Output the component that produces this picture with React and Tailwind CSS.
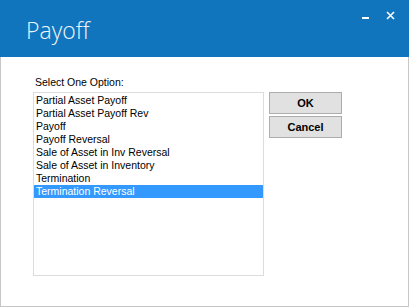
import React, { useState } from 'react';

const options = [
    'Partial Asset Payoff',
    'Partial Asset Payoff Rev',
    'Payoff',
    'Payoff Reversal',
    'Sale of Asset in Inv Reversal',
    'Sale of Asset in Inventory',
    'Termination',
    'Termination Reversal',
];

const App = () => {
    const [selected, setSelected] = useState('Termination Reversal');

    return (
        <div className="w-[409px] h-[307px] flex flex-col bg-white overflow-hidden" style={{ fontFamily: '"Liberation Sans", Arial, sans-serif' }}>
            <div className="h-[57px] shrink-0 bg-[#1075bd] flex items-start justify-between">
                <h1 className="pl-[26px] pt-[16px] text-[23px] leading-[28px] font-light text-[#eef5fb]" style={{ fontFamily: '"Open Sans", "Noto Sans", sans-serif' }}>Payoff</h1>
                <div className="flex items-start pt-[11px] pr-[14px]">
                    <span className="mt-[6px] w-[7px] h-[2px] bg-white" />
                    <svg className="ml-[17px]" width="9" height="9" viewBox="0 0 9 9">
                        <path d="M1 1 L8 8 M8 1 L1 8" stroke="white" strokeWidth="1.6" />
                    </svg>
                </div>
            </div>
            <div className="flex-1 border-x border-b border-[#c6c6c6] flex flex-col">
                <p className="pl-[34px] pt-[19px] text-[10.5px] leading-[13px] text-black">Select One Option:</p>
                <div className="flex pl-[32px] pt-[3px]">
                    <div className="w-[231px] h-[184px] border border-[#dcdcdc] py-px">
                        {options.map(o => (
                            <div
                                key={o}
                                onClick={() => setSelected(o)}
                                className={`h-[13px] pl-[2px] text-[10.5px] leading-[13px] whitespace-nowrap ${selected === o ? 'bg-[#3399ff] text-white' : 'text-black'}`}
                            >
                                {o}
                            </div>
                        ))}
                    </div>
                    <div className="ml-[5px] flex flex-col gap-[2px]">
                        <button className="w-[73px] h-[22px] bg-[#e1e1e1] border border-[#adadad] text-[11px] font-bold text-black">OK</button>
                        <button className="w-[73px] h-[22px] bg-[#e1e1e1] border border-[#adadad] text-[11px] font-bold text-black">Cancel</button>
                    </div>
                </div>
            </div>
        </div>
    );
};

export default App;
